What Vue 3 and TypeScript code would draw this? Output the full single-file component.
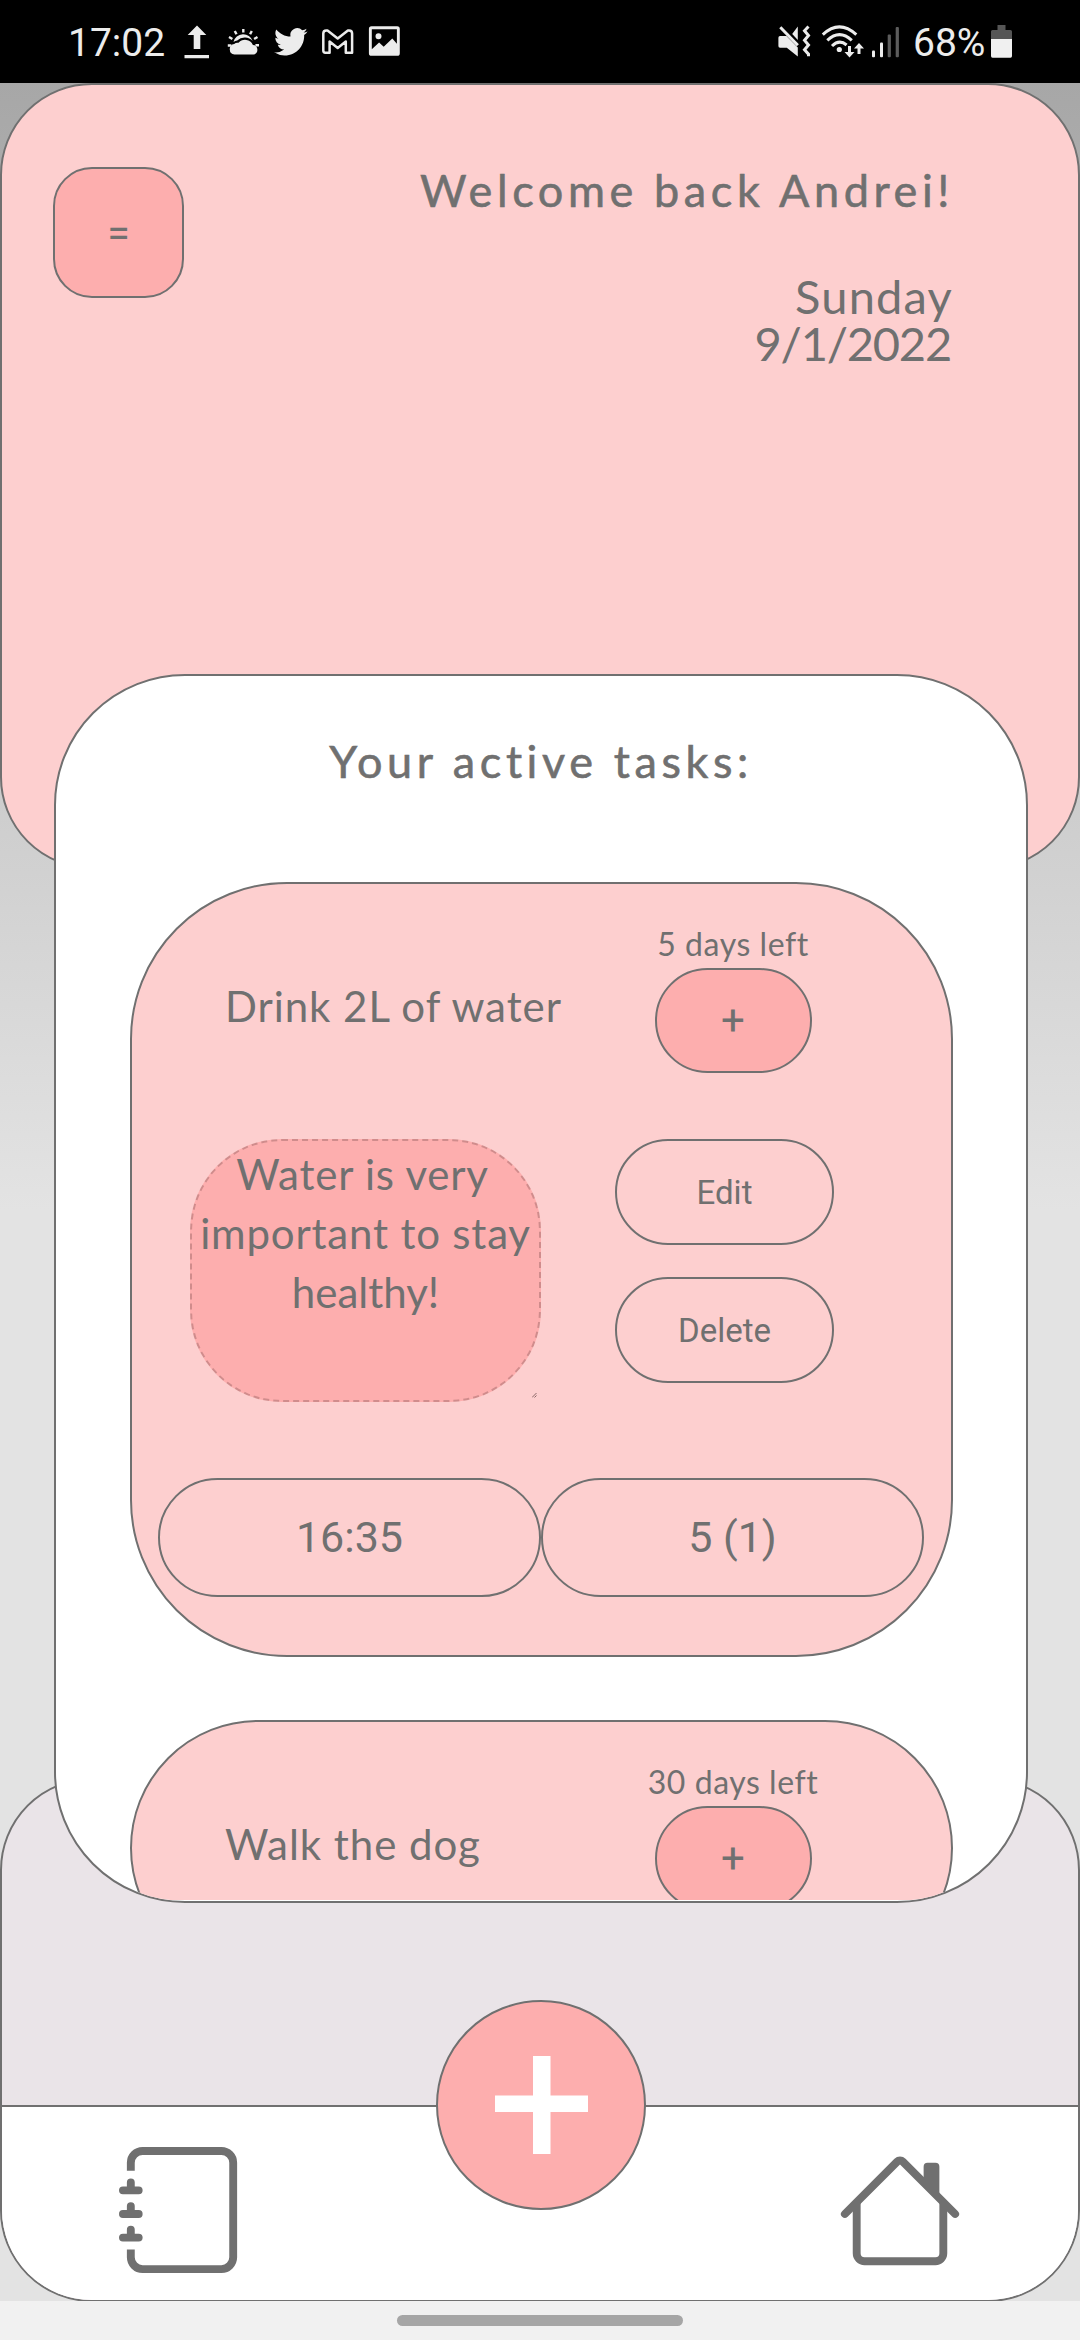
<script setup lang="ts">
import { ref } from 'vue'

interface Task {
  id: string
  title: string
  left: string
  note?: string[]
  time?: string
  progress?: string
}

const user = ref('Andrei')
const tasks = ref<Task[]>([
  {
    id: 'water',
    title: 'Drink 2L of water',
    left: '5 days left',
    note: ['Water is very', 'important to stay', 'healthy!'],
    time: '16:35',
    progress: '5 (1)',
  },
  { id: 'dog', title: 'Walk the dog', left: '30 days left' },
])
</script>

<template>
  <div class="phone">
    <div class="status">
      <span class="clock">17:02</span>
      <svg class="status-left" viewBox="180 0 230 83" width="230" height="83" fill="#ececec">
        <path d="M197 25.500l9.300 9.500h-6v14h-6.600v-14h-6zM184.500 55h24.500v3.200h-24.500z" />
        <path d="M234.500 54.500a5.300 5.300 0 0 1-.3-10.500 5 5 0 0 1 4.300-1.200 8.600 8.600 0 0 1 14.400 2.200 4.800 4.800 0 0 1 .6 9.500z" />
        <path d="M233.500 42a10 10 0 0 1 19.200-.9 10.800 10.800 0 0 0-15.500-.6 7 7 0 0 0-3.700 1.500z" />
        <g stroke="#ececec" stroke-width="2.400" fill="none">
          <path d="M243.300 29v3.600M234.800 31l1.700 3.300M251.800 31l-1.700 3.300M229 37l3.400 2M257.500 37l-3.400 2M227.800 45.500h3.600M255.400 45.200h3.600" />
        </g>
        <g transform="translate(274 25) scale(1.400)">
          <path d="M23.950 4.570a10 10 0 0 1-2.820.78 4.960 4.960 0 0 0 2.160-2.730c-.95.56-2 .96-3.130 1.180a4.920 4.920 0 0 0-8.380 4.480C7.690 8.100 4.070 6.130 1.640 3.160a4.820 4.820 0 0 0-.67 2.480c0 1.710.87 3.210 2.190 4.100a4.900 4.900 0 0 1-2.230-.62v.06a4.920 4.920 0 0 0 3.950 4.830 5 5 0 0 1-2.210.08 4.940 4.940 0 0 0 4.600 3.420A9.870 9.870 0 0 1 0 19.540a14 14 0 0 0 7.550 2.210c9.050 0 14-7.500 14-13.980 0-.21 0-.42-.02-.63a9.940 9.940 0 0 0 2.460-2.550z" />
        </g>
        <path
          d="M323.300 50.500V33.500q0-3 3-3h1.200l10.200 8 10.200-8h1.200q3 0 3 3v19.200h-6.300V41.600l-8.100 6.400-8.100-6.400v11.100h-4.300q-2 0-2-2.200z"
          fill="none"
          stroke="#ececec"
          stroke-width="2.500"
          stroke-linejoin="round"
        />
        <path
          fill-rule="evenodd"
          d="M371.500 26.300h25.700q2.600 0 2.600 2.600v24.300q0 2.600-2.600 2.600h-25.700q-2.600 0-2.600-2.600V28.900q0-2.600 2.600-2.600zM371.800 29.200v20l7.300-6.800 4.600 4.400 8.600-8.200 4.600 5.200V29.200zM378.500 33.300a3 3 0 1 1 0 6 3 3 0 0 1 0-6z"
        />
      </svg>
      <svg class="status-right" viewBox="775 0 128 83" width="128" height="83" fill="#ececec">
        <path d="M780 36h6.500l11.300 11.500v9l-11-8.800H780q-1.600 0-1.600-1.700v-8.300q0-1.700 1.600-1.700zM797.800 26.500V40l-5.600-6z" />
        <path d="M780.300 27.300l17.500 18" stroke="#ececec" stroke-width="3" />
        <path d="M808.500 26.500l-4 4.300 4 4.700-4 4.800 4 4.700-4 4.800 4 4.400v2" fill="none" stroke="#ececec" stroke-width="3" />
        <g fill="none" stroke="#ececec" stroke-width="3">
          <path d="M822.800 34.600q16.500-15.500 33.500 0M827.300 40.400q12.200-11.500 24.500 0M832 46q7.300-7.300 14.600-1" />
        </g>
        <circle cx="839.300" cy="49.500" r="2.600" />
        <path d="M848 46h3v6h3.500l-5 5.500-5-5.500h3.500zM857.500 54h3v-5.500h3.500l-5-5.500-5 5.500h3.500z" />
        <rect x="872" y="50.500" width="3" height="6.700" rx="1" />
        <rect x="880" y="42.500" width="3" height="14.700" rx="1" />
        <rect x="887.700" y="34.500" width="3.200" height="22.700" rx="1" fill="#5c5c5c" />
        <rect x="895.700" y="27" width="3.200" height="30.200" rx="1" fill="#5c5c5c" />
      </svg>
      <span class="percent">68%</span>
      <svg class="battery" viewBox="0 0 21 33" width="21" height="33">
        <path d="M6.500 0h8v5h5q1.500 0 1.500 1.500V14H0V6.500Q0 5 1.500 5h5z" fill="#565656" />
        <path d="M0 14h21v17q0 1.700-1.500 1.700h-18Q0 32.700 0 31z" fill="#f0f0f0" />
      </svg>
    </div>

    <main class="screen">
      <header class="hero">
        <button class="menu">=</button>
        <div class="greeting">
          <h1>Welcome back {{ user }}!</h1>
          <p class="day">Sunday</p>
          <p class="date">9/1/2022</p>
        </div>
      </header>

      <section class="panel">
        <h2>Your active tasks:</h2>
        <div class="list">
          <article v-for="task in tasks" :key="task.id" class="card" :class="{ short: !task.note }">
            <div class="card-head">
              <span class="title">{{ task.title }}</span>
              <div class="side">
                <span class="left">{{ task.left }}</span>
                <button class="inc">+</button>
              </div>
            </div>
            <template v-if="task.note">
              <div class="card-body">
                <div class="note">
                  <span v-for="line in task.note" :key="line">{{ line }}</span>
                  <svg class="grip" viewBox="0 0 5 5" width="5" height="5">
                    <path d="M0 4.500L4.500 0M2.500 4.500L4.500 2.500" stroke="#6b4b4b" stroke-width=".8" />
                  </svg>
                </div>
                <div class="actions">
                  <button>Edit</button>
                  <button>Delete</button>
                </div>
              </div>
              <div class="stats">
                <span>{{ task.time }}</span>
                <span>{{ task.progress }}</span>
              </div>
            </template>
          </article>
        </div>
      </section>

      <section class="dock">
        <nav>
          <svg viewBox="0 0 16 16" width="126" height="126" fill="#707070">
            <path d="M3 0h10a2 2 0 0 1 2 2v12a2 2 0 0 1-2 2H3a2 2 0 0 1-2-2v-1h1v1a1 1 0 0 0 1 1h10a1 1 0 0 0 1-1V2a1 1 0 0 0-1-1H3a1 1 0 0 0-1 1v1H1V2a2 2 0 0 1 2-2z" />
            <path d="M1 5v-.5a.5.5 0 0 1 1 0V5h.5a.5.5 0 0 1 0 1h-2a.5.5 0 0 1 0-1H1zm0 3v-.5a.5.5 0 0 1 1 0V8h.5a.5.5 0 0 1 0 1h-2a.5.5 0 0 1 0-1H1zm0 3v-.5a.5.5 0 0 1 1 0v.5h.5a.5.5 0 0 1 0 1h-2a.5.5 0 0 1 0-1H1z" />
          </svg>
          <svg viewBox="0 0 16 16" width="126" height="126" fill="#707070">
            <path d="M2 13.500V7h1v6.500a.5.5 0 0 0 .5.5h9a.5.5 0 0 0 .5-.5V7h1v6.500a1.500 1.500 0 0 1-1.500 1.500h-9A1.500 1.500 0 0 1 2 13.500zm11-11V6l-2-2V2.500a.5.5 0 0 1 .5-.5h1a.5.5 0 0 1 .5.5z" />
            <path d="M7.293 1.500a1 1 0 0 1 1.414 0l6.647 6.646a.5.5 0 0 1-.708.708L8 2.207 1.354 8.854a.5.5 0 1 1-.708-.708L7.293 1.500z" />
          </svg>
        </nav>
        <button class="fab" aria-label="Add task">
          <svg viewBox="0 0 93 98" width="93" height="98" fill="#fff">
            <path d="M38 0h17.500v39.500H93V56H55.500v42H38V56H0V39.500h38z" />
          </svg>
        </button>
      </section>
    </main>

    <footer class="gesture"><i></i></footer>
  </div>
</template>

<style>
html,
body {
  margin: 0;
  background: #f1f1f1;
}
</style>

<style scoped>
.phone {
  width: 1080px;
  height: 2340px;
  overflow: hidden;
  display: flex;
  flex-direction: column;
  color: #707070;
  font-family: Lato, 'Open Sans', sans-serif;
}
* {
  box-sizing: border-box;
}
button {
  margin: 0;
  padding: 0;
  font-family: Roboto, sans-serif;
  color: #707070;
  border: 2px solid #707070;
  background: #fdcfcf;
}
h1,
h2,
p {
  margin: 0;
}
svg {
  display: block;
  flex: none;
}

.status {
  flex: none;
  height: 83px;
  background: #000;
  color: #ececec;
  display: flex;
  font-family: Roboto, sans-serif;
  font-size: 39px;
  line-height: 87px;
  padding-left: 68px;
}
.clock {
  width: 112px;
}
.status-right {
  margin-left: 365px;
}
.percent {
  width: 78px;
  margin-left: 10px;
}
.battery {
  margin-top: 25px;
}

.screen {
  flex: none;
  height: 2218px;
  overflow: hidden;
  background: linear-gradient(#a7a7a7 0, #e3e3e3 1127px);
}
.hero {
  height: 786px;
  border: 2px solid #707070;
  border-radius: 92px;
  background: #fdcfcf;
  display: flex;
  justify-content: space-between;
  padding: 82px 126px 0 51px;
}
.menu {
  width: 131px;
  height: 131px;
  border-radius: 39px;
  background: #fdaeae;
  font-size: 41px;
}
.greeting {
  text-align: right;
  margin-top: -4px;
}
h1,
h2 {
  font-size: 45px;
  line-height: 54px;
  font-weight: 400;
  letter-spacing: 4.600px;
  -webkit-text-stroke: 0.6px #707070;
}
h1 {
  margin-right: -2px;
}
.day,
.date {
  font-size: 47px;
  line-height: 47px;
}
.day {
  margin: 56px -1px 0 0;
  letter-spacing: 1.200px;
}
.date {
  margin-right: 1px;
  letter-spacing: -1.200px;
}

.panel {
  position: relative;
  z-index: 1;
  width: 974px;
  height: 1229px;
  margin: -195px 0 0 54px;
  padding-bottom: 1px;
  border: 2px solid #707070;
  border-radius: 131px;
  background: #fff;
  overflow: hidden;
  display: flex;
  flex-direction: column;
}
h2 {
  flex: none;
  text-align: center;
  margin-top: 58px;
}
.list {
  flex: 1;
  min-height: 0;
  overflow: hidden;
  margin-top: 94px;
  padding-left: 74px;
  display: flex;
  flex-direction: column;
  gap: 63px;
}
.card {
  flex: none;
  width: 823px;
  height: 775px;
  border: 2px solid #707070;
  border-radius: 157px;
  background: #fdcfcf;
}
.card.short {
  height: 256px;
}
.card-head {
  display: flex;
  height: 189px;
}
.title {
  width: 451px;
  padding: 97px 0 0 93px;
  font-size: 42px;
  line-height: 50px;
  letter-spacing: 0.950px;
  white-space: nowrap;
}
.side {
  width: 300px;
  padding-top: 40px;
  display: flex;
  flex-direction: column;
  align-items: center;
}
.left {
  margin-bottom: 4px;
  font-size: 32px;
  line-height: 40px;
  letter-spacing: 0.550px;
}
.inc {
  width: 157px;
  height: 105px;
  border-radius: 53px;
  background: #fdaeae;
  font-size: 42px;
}
.card-body {
  display: flex;
  margin: 66px 0 0 58px;
}
.note {
  position: relative;
  width: 351px;
  height: 263px;
  padding-top: 4px;
  border: 2px dashed #d08c8c;
  border-radius: 92px;
  background: #fdaeae;
  text-align: center;
  font-size: 42px;
  line-height: 59px;
  letter-spacing: 0.800px;
}
.note span {
  display: block;
  white-space: nowrap;
}
.note span:first-child {
  padding-right: 6px;
}
.note span:nth-child(3) {
  letter-spacing: 0;
}
.grip {
  position: absolute;
  right: 2px;
  bottom: 2px;
}
.actions {
  margin-left: 74px;
  display: flex;
  flex-direction: column;
  gap: 32px;
}
.actions button {
  width: 219px;
  height: 106px;
  border-radius: 53px;
  font-size: 33px;
}
.stats {
  display: flex;
  margin: 76px 0 0 26px;
}
.stats span {
  width: 383px;
  height: 119px;
  border: 2px solid #707070;
  border-radius: 60px;
  text-align: center;
  font-family: Roboto, sans-serif;
  font-size: 43px;
  line-height: 115px;
}

.dock {
  position: relative;
  height: 524px;
  margin-top: -125px;
  border: 2px solid #707070;
  border-radius: 92px;
  background: #eae4e8;
  overflow: hidden;
}
nav {
  height: 200px;
  margin-top: 325px;
  border-top: 2px solid #707070;
  background: #fff;
  display: flex;
  justify-content: space-between;
  padding: 40px 115px 0 117px;
}
.fab {
  position: absolute;
  left: 434px;
  top: 220px;
  width: 210px;
  height: 210px;
  border-radius: 50%;
  background: #fdaeae;
  display: flex;
  align-items: center;
  justify-content: center;
}

.gesture {
  flex: 1;
  background: #f1f1f1;
  display: flex;
  justify-content: center;
  padding-top: 14px;
}
.gesture i {
  width: 286px;
  height: 11px;
  border-radius: 6px;
  background: #a6a6a6;
}
</style>
